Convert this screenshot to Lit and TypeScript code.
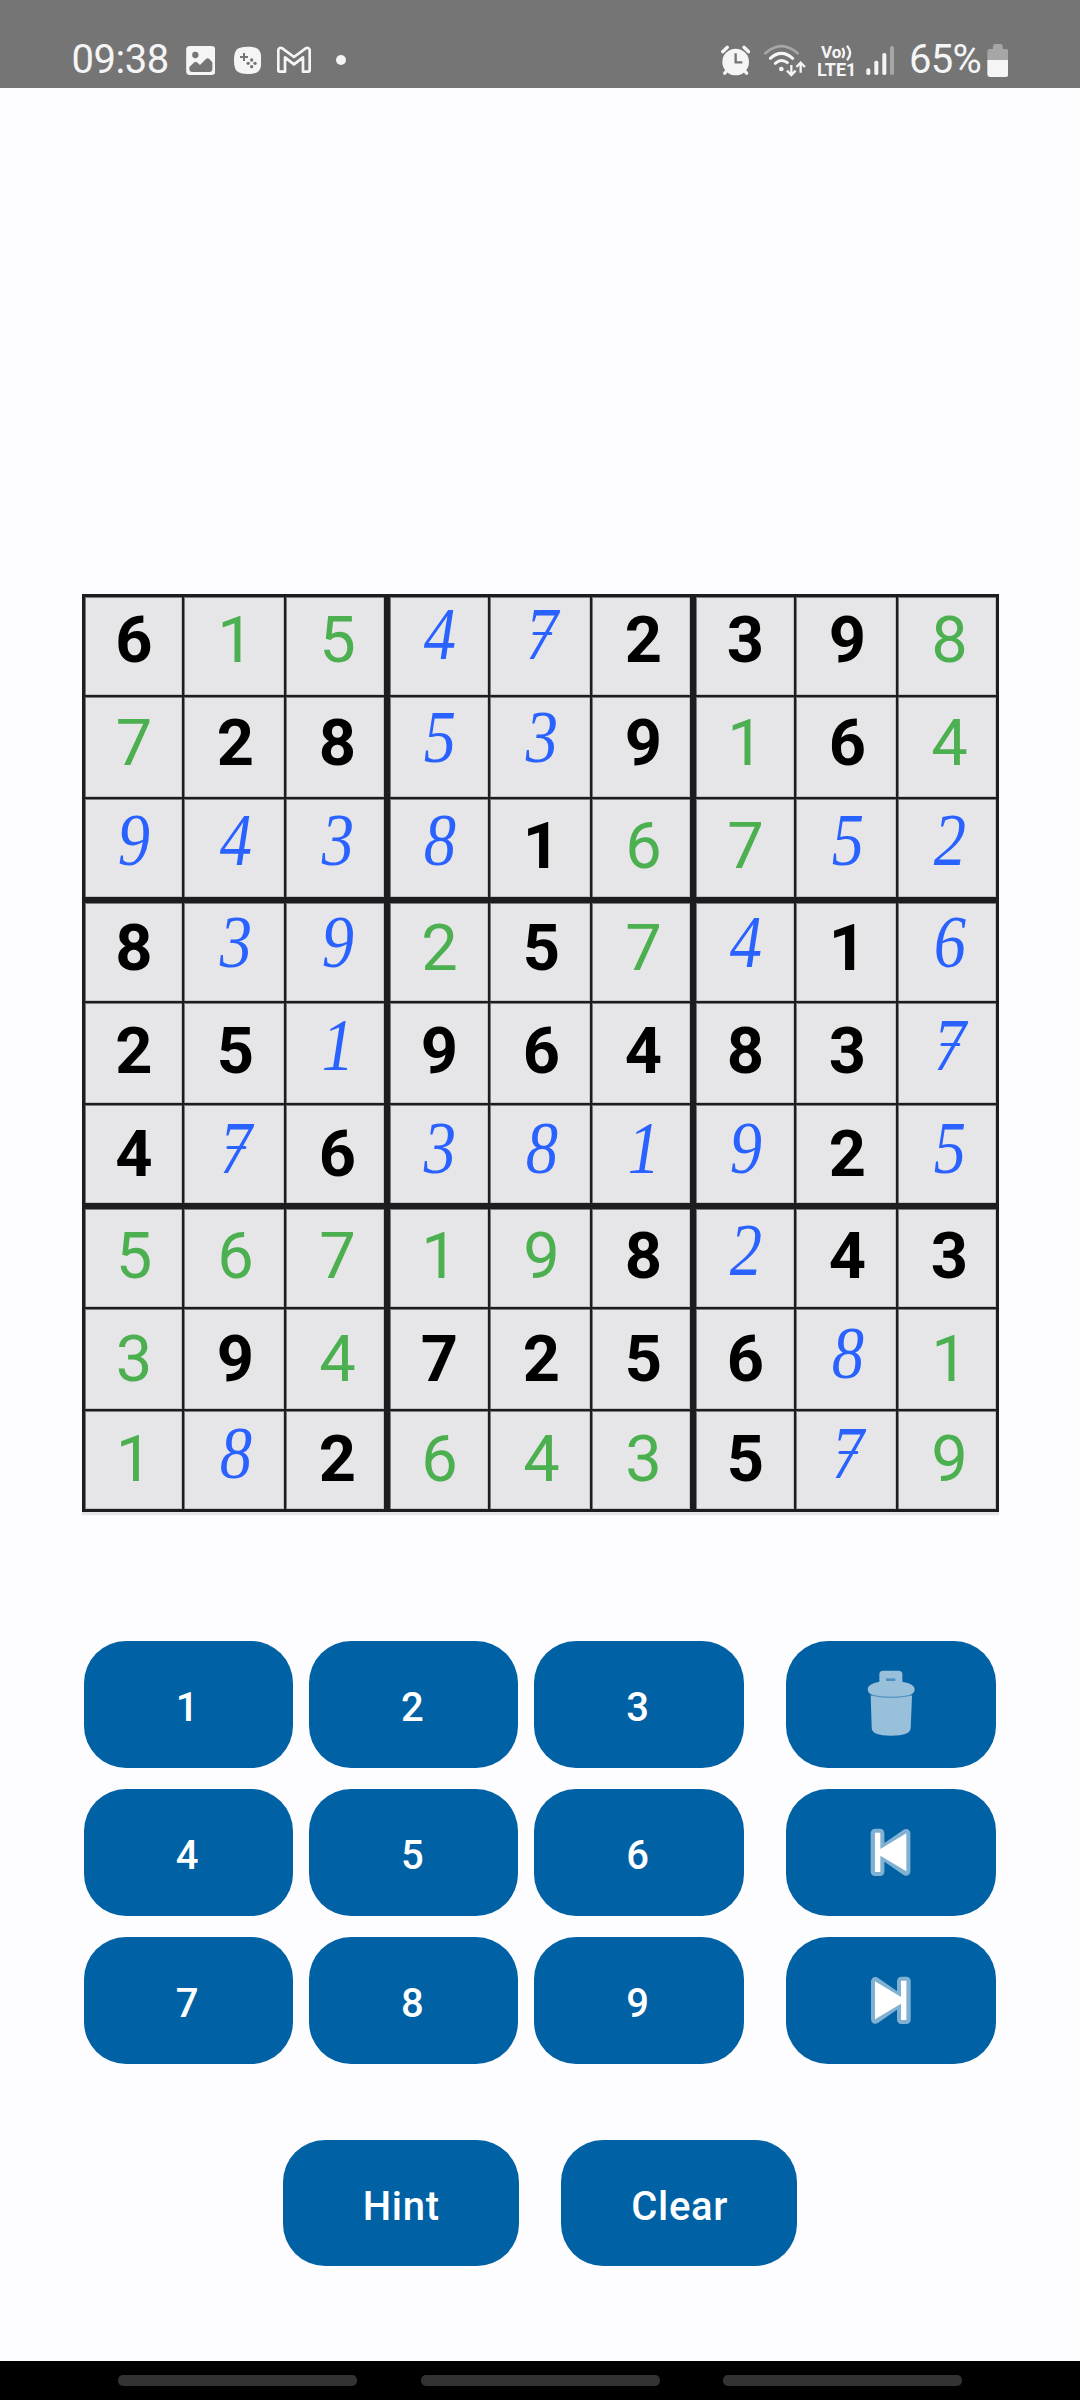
import { LitElement, html, css, svg } from "lit";
import { customElement, property } from "lit/decorators.js";
import { classMap } from "lit/directives/class-map.js";
import { styleMap } from "lit/directives/style-map.js";

// g = given digit, h = hinted digit, p = digit entered by the player
const BOARD: string[] = [
  "6g 1h 5h 4p 7p 2g 3g 9g 8h",
  "7h 2g 8g 5p 3p 9g 1h 6g 4h",
  "9p 4p 3p 8p 1g 6h 7h 5p 2p",
  "8g 3p 9p 2h 5g 7h 4p 1g 6p",
  "2g 5g 1p 9g 6g 4g 8g 3g 7p",
  "4g 7p 6g 3p 8p 1p 9p 2g 5p",
  "5h 6h 7h 1h 9h 8g 2p 4g 3g",
  "3h 9g 4h 7g 2g 5g 6g 8p 1h",
  "1h 8p 2g 6h 4h 3h 5g 7p 9h",
];

@customElement("status-bar")
class StatusBar extends LitElement {
  static styles = css`
    :host {
      display: flex;
      height: 87.67px;
      background: #757575;
      color: #f5f5f5;
      font-family: Roboto, sans-serif;
      overflow: hidden;
    }
    svg {
      display: block;
      flex: none;
      height: 87.67px;
      fill: #f5f5f5;
    }
    .left,
    .right {
      display: flex;
      align-items: flex-start;
    }
    .left {
      padding-left: 71.6px;
      width: 649.1px;
      box-sizing: border-box;
      flex: none;
    }
    .clock,
    .percent {
      flex: none;
      font-size: 40px;
      line-height: 88px;
      padding-top: 16.4px;
      white-space: nowrap;
    }
    .clock {
      width: 114px;
      letter-spacing: -0.5px;
    }
    .percent {
      width: 77.6px;
      margin-left: 15.4px;
      letter-spacing: -0.8px;
    }
    .picture { width: 29.33px; }
    .game { width: 27.33px; margin-left: 18.67px; }
    .mail { width: 34px; margin-left: 16.33px; }
    .dot { width: 10px; margin-left: 24.67px; }
    .right { padding-left: 71.57px; }
    .alarm { width: 29.33px; }
    .wifi { width: 41.67px; margin-left: 14.33px; }
    .volte { width: 38.33px; margin-left: 12.33px; }
    .bars { width: 28px; margin-left: 9px; }
    .battery { width: 21.67px; }
    .dim { fill: #a6a6a6; }
    .line { fill: none; stroke: #f5f5f5; }
    .dimline { fill: none; stroke: #a6a6a6; }
    .hole { fill: #757575; }
    .holeline { fill: none; stroke: #757575; }
    .net { font-family: Roboto, sans-serif; font-weight: 700; }
  `;

  render() {
    return html`
      <div class="left">
        <span class="clock">09:38</span>
        <svg class="picture" viewBox="557 0 88 263">
          <rect x="557.5" y="138" width="87.5" height="87" rx="11" />
          <circle class="hole" cx="585" cy="165" r="9.5" />
          <path class="hole" d="M567 201 582 187Q586 184 590 187L599 195 617 177Q622 172 627 177L636 187V207Q636 216 627 216H576Q567 216 567 207Z" />
        </svg>
        <svg class="game" viewBox="701 0 82 263">
          <path d="M742 140C774 140 783 149 783 181S774 222 742 222 701 213 701 181 710 140 742 140Z" />
          <path class="holeline" stroke-width="6" d="M719 171H743M731 159V183" />
          <circle class="hole" cx="754" cy="180" r="5" />
          <circle class="hole" cx="754" cy="200" r="5" />
          <circle class="hole" cx="743.5" cy="190" r="5" />
          <circle class="hole" cx="764" cy="190" r="5" />
        </svg>
        <svg class="mail" viewBox="832 0 102 263">
          <path
            class="line"
            stroke-width="8"
            stroke-linejoin="round"
            d="M836 211V149Q839 141 848 145L883 171 918 145Q927 141 930 149V211Q930 215 926 215H910V172L883 193 856 172V215H840Q836 215 836 211Z"
          />
        </svg>
        <svg class="dot" viewBox="1008 0 30 263"><circle cx="1023" cy="180" r="15" /></svg>
      </div>
      <div class="right">
        <svg class="alarm" viewBox="122 0 88 263">
          <circle cx="166" cy="186" r="40" />
          <path class="line" stroke-width="10" stroke-linecap="round" d="M127 155 141 142M205 155 191 142" />
          <path class="line" stroke-width="10" stroke-linecap="round" d="M141 210 133 220M191 210 199 220" />
          <path class="holeline" stroke-width="7" d="M166 160V187H186" />
        </svg>
        <svg class="wifi" viewBox="253 0 125 263">
          <path class="dimline" stroke-width="8" stroke-linecap="round" d="M257 160Q305 117 354 160" />
          <path class="line" stroke-width="9" stroke-linecap="round" d="M272 175Q305 145 339 175M287 190Q305 174 323 188" />
          <circle cx="305" cy="207" r="7" />
          <path class="line" stroke-width="7" d="M335 195V223M322 212 335 225 348 212M363 218V190M350 201 363 188 376 201" />
        </svg>
        <svg class="volte" viewBox="415 0 115 263">
          <text class="net" x="424" y="175" font-size="52" textLength="61" lengthAdjust="spacingAndGlyphs">Vo</text>
          <path class="line" stroke-width="7" d="M488 144Q498 158 488 174M502 137Q521 159 502 181" />
          <text class="net" x="412" y="228" font-size="54" textLength="118" lengthAdjust="spacingAndGlyphs">LTE1</text>
        </svg>
        <svg class="bars" viewBox="557 0 84 263">
          <rect x="558" y="205" width="12" height="20" rx="5" />
          <rect x="582" y="182" width="12" height="43" rx="5" />
          <rect x="606" y="159" width="12" height="66" rx="5" />
          <rect class="dim" x="629" y="138" width="12" height="87" rx="5" />
        </svg>
        <span class="percent">65%</span>
        <svg class="battery" viewBox="920 0 65 263">
          <path class="dim" d="M921 181V155Q921 147 929 147H938V139Q938 132 945 132H960Q967 132 967 139V147H976Q984 147 984 155V181Z" />
          <path d="M921 180H984V222Q984 231 975 231H930Q921 231 921 222Z" />
        </svg>
      </div>
    `;
  }
}

@customElement("sudoku-board")
class SudokuBoard extends LitElement {
  static styles = css`
    :host {
      display: grid;
      grid-template-columns: 101px repeat(8, 102px);
      grid-auto-rows: 102px;
      width: 917px;
      box-shadow: 0 3px 1px #e6e6e8;
    }
    .cell {
      --l: 1px;
      --t: 1px;
      --r: -1px;
      --b: -1px;
      display: flex;
      justify-content: center;
      align-items: flex-start;
      box-sizing: border-box;
      padding-left: 3px;
      background: #e6e6e8;
      box-shadow:
        inset var(--l) var(--t) 0 #1d1c20,
        inset var(--r) var(--b) 0 #1d1c20,
        inset calc(var(--l) + 1px) calc(var(--t) + 1px) 0 #7c7c7f,
        inset calc(var(--r) - 1px) calc(var(--b) - 1px) 0 #c4c4c6;
    }
    .box-left { --l: 3px; }
    .box-top { --t: 3px; }
    .box-right { --r: -3px; }
    .box-bottom { --b: -3px; }
    .digit {
      display: block;
      margin-top: var(--drop);
      font: 400 65px/93px Roboto, sans-serif;
    }
    .given { font-weight: 700; color: #000; }
    .hint { color: #4caf50; }
    .player {
      font: italic 400 75px/79px "Liberation Serif", serif;
      color: #2962ff;
      transform: scaleX(0.86);
    }
    .crossed { position: relative; }
    .crossed::after {
      content: "";
      position: absolute;
      left: 8px;
      top: 38px;
      width: 23px;
      height: 3px;
      border-radius: 2px;
      background: #2962ff;
    }
  `;

  render() {
    return BOARD.map((row, r) =>
      row.split(" ").map((item, c) => {
        const kind = item[1];
        return html`<div
          class=${classMap({
            cell: true,
            "box-left": c % 3 === 0,
            "box-right": c % 3 === 2,
            "box-top": r % 3 === 0,
            "box-bottom": r % 3 === 2,
          })}
        ><span
          class=${classMap({
            digit: true,
            given: kind === "g",
            hint: kind === "h",
            player: kind === "p",
            crossed: item === "7p",
          })}
          style=${styleMap({ "--drop": `${r === 8 ? 3 : 0.5 + r * 0.65}px` })}
        >${item[0]}</span></div>`;
      })
    );
  }
}

@customElement("pad-button")
class PadButton extends LitElement {
  @property() label = "";
  @property() icon = "";

  static styles = css`
    :host {
      display: flex;
      align-items: center;
      justify-content: center;
      height: 126.4px;
      border-radius: 42px;
      background: #0061a4;
      color: #fff;
      font: 500 40px/47px Roboto, sans-serif;
      letter-spacing: 0.7px;
    }
    .label { padding-top: 6px; }
    .digit { margin-right: 2px; }
    .word { margin-left: 1px; }
    svg { display: block; width: 100%; height: 100%; }
    .soft { fill: #99c0db; }
    .seam { fill: none; stroke: #4d90bf; stroke-width: 3; }
    .slot { fill: #4d90bf; }
    .halo { fill: #80b0d2; stroke: #80b0d2; stroke-width: 26; stroke-linejoin: round; }
    .solid { fill: #fff; }
  `;

  private skip() {
    return svg`
      <path class="halo" d="M347 640H362V756H347ZM440 641V755L358 698Z" />
      <path class="solid" d="M347 639H363V688L441 641V755L363 708V757H347Z" />`;
  }

  private glyph() {
    if (this.icon === "trash")
      return html`<svg viewBox="80 64 628 379">
        <path class="soft" d="M360 186V164Q360 153 371 153H418Q429 153 429 164V186Q466 192 466 209Q466 234 396 234Q325 234 325 209Q325 192 360 186Z" />
        <path class="soft" d="M334 227Q396 241 458 227L454 325Q454 348 395 348Q337 348 337 325Z" />
        <path class="seam" d="M333 226Q396 240 459 226" />
        <rect class="slot" x="380" y="176" width="28" height="8" />
      </svg>`;
    if (this.icon === "back") return html`<svg viewBox="80 508 628 379">${this.skip()}</svg>`;
    return html`<svg viewBox="80 508 628 379"><g transform="translate(788 0) scale(-1 1)">${this.skip()}</g></svg>`;
  }

  render() {
    if (this.icon) return this.glyph();
    const word = this.label.length > 1;
    return html`<span class=${classMap({ label: true, word, digit: !word })}>${this.label}</span>`;
  }
}

@customElement("app-root")
class AppRoot extends LitElement {
  static styles = css`
    :host {
      display: flex;
      flex-direction: column;
      width: 1080px;
      height: 2400px;
      background: #fdfcff;
      overflow: hidden;
    }
    .play {
      flex: 1;
      display: flex;
      flex-direction: column;
    }
    sudoku-board { margin: 506.33px 0 0 82px; }
    .pad {
      display: grid;
      grid-template-columns: repeat(3, 209.4px) 209.4px;
      column-gap: 15.8px;
      row-gap: 21.6px;
      margin: 129.2px 0 0 83.8px;
    }
    .tool { margin: 0 -27px 0 27px; }
    .actions {
      display: grid;
      grid-template-columns: 235.7px 235.7px;
      column-gap: 42.8px;
      margin: 76.4px 0 0 282.9px;
    }
    .nav {
      flex: none;
      display: flex;
      gap: 63.5px;
      height: 39px;
      padding: 14px 0 0 118px;
      box-sizing: border-box;
      background: #000;
    }
    .pill {
      width: 239px;
      height: 11px;
      border-radius: 5px;
      background: #333;
    }
  `;

  render() {
    const rows = [["1", "2", "3", "trash"], ["4", "5", "6", "back"], ["7", "8", "9", "forward"]];
    return html`
      <status-bar></status-bar>
      <main class="play">
        <sudoku-board></sudoku-board>
        <div class="pad">
          ${rows.map(
            ([a, b, c, tool]) => html`
              ${[a, b, c].map((n) => html`<pad-button label=${n}></pad-button>`)}
              <pad-button class="tool" icon=${tool}></pad-button>
            `
          )}
        </div>
        <div class="actions">
          <pad-button label="Hint"></pad-button>
          <pad-button label="Clear"></pad-button>
        </div>
      </main>
      <div class="nav">
        <span class="pill"></span>
        <span class="pill"></span>
        <span class="pill"></span>
      </div>
    `;
  }
}
